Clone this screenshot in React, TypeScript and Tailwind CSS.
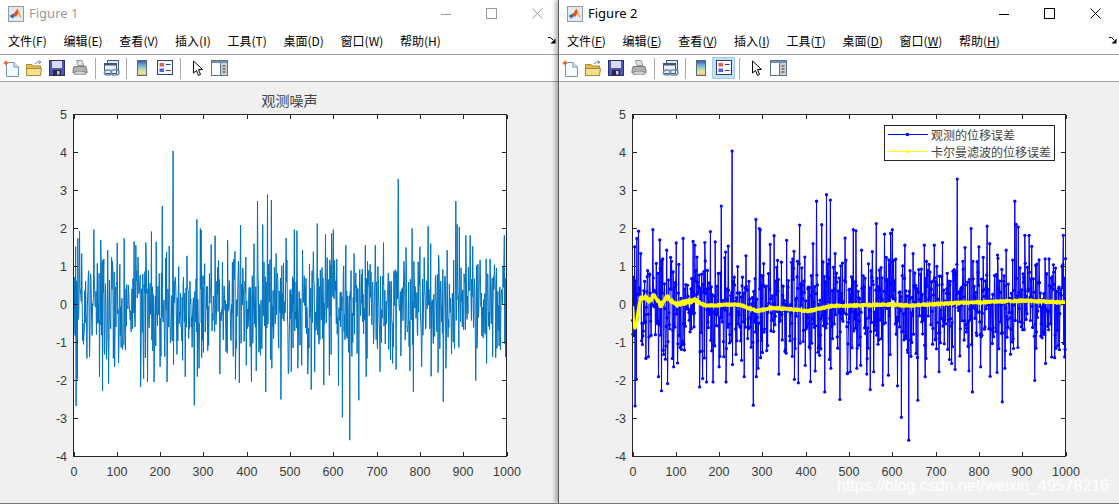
import type { ReactNode } from 'react';

// seeded noise, with the visible peaks of the reference pinned by sample index
const peaks: Record<number, number> = {
  5: 1.52, 6: -2.67, 9: -1.97, 10: 1.74, 14: 1.93, 19: 1.34, 31: -1.42, 47: 1.97, 60: -1.9, 63: 1.7, 67: -2.27,
  70: 1.2, 79: 1.43, 81: -2.08, 88: 1.24, 95: -1.64, 101: 1.62, 104: -1.54, 117: 1.74, 120: -1.2, 140: 1.66,
  144: 1.56, 149: 1.25, 155: -2.17, 162: -1.95, 167: 1.63, 171: -2.04, 180: 1.92, 186: -2.04, 191: 1.65,
  200: -1.64, 205: 2.59, 215: 1.38, 216: -2.04, 221: 1.54, 230: 4.04, 231: -1.58, 243: 1, 252: -1.47, 258: -1.9,
  262: 1.28, 279: -2.65, 285: 2.24, 286: -1.9, 290: -1.68, 293: 2, 295: 1.96, 296: -1.4, 318: 1.58, 327: 1.81,
  335: 1.16, 338: -1.83, 356: 1.69, 373: 1.4, 374: -1.97, 383: -2.06, 386: 2.09, 398: 1.25, 399: -1.6, 411: -2.03,
  417: 1.6, 422: -1.75, 425: 2.72, 437: 2.1, 444: -2.3, 448: 2.89, 457: 2.75, 458: -1.68, 468: 1.34, 479: -2.5,
  491: 1.75, 496: -1.82, 497: -1.8, 503: -1.77, 510: 1.97, 516: 1.94, 518: -1.68, 527: -1.6, 529: 1.43, 541: -1.83,
  549: -2.24, 554: 1.39, 557: -1.77, 563: 2.13, 578: -2.12, 582: 1.85, 591: -1.86, 596: 1.87, 600: 1.97, 612: -2.14,
  621: -2.97, 629: 1.56, 638: -3.57, 648: 1.34, 659: -2.52, 674: 1.56, 676: -1.9, 697: 1.56, 708: -1.77, 716: 1.63,
  737: -1.55, 745: -1.71, 750: 3.3, 768: 1.5, 777: -1.75, 782: 2, 785: -2.3, 800: 1.52, 804: -1.64, 819: 2.06,
  825: 1.6, 826: -1.89, 842: -1.79, 843: 1.3, 854: -2.56, 860: -1.68, 863: 1.43, 883: 2.72, 886: 2.11, 891: 2.04,
  906: 1.82, 916: 1.82, 922: 1.53, 929: -2, 934: 1.06, 953: 1.2, 954: -1.55, 973: 0.85, 975: -1.4, 995: 1.82, 998: -1.38,
};

const filterPoints = [
  [0, 0], [3, -0.55], [8, -0.6], [14, -0.1], [19, 0.16], [30, 0.18], [39, 0.09], [51, 0.26], [65, -0.03], [80, 0.2],
  [99, 0], [145, 0.11], [168, -0.03], [245, 0], [287, -0.17], [322, -0.09], [406, -0.17], [460, -0.04], [599, 0],
  [637, -0.03], [753, 0.04], [907, 0.1], [1000, 0.05],
];

function makeRandom(seed: number) {
  let a = seed;
  return () => {
    a = (a + 0x6d2b79f5) | 0;
    let t = Math.imul(a ^ (a >>> 15), 1 | a);
    t = (t + Math.imul(t ^ (t >>> 7), 61 | t)) ^ t;
    return ((t ^ (t >>> 14)) >>> 0) / 4294967296;
  };
}

const rand = makeRandom(4957);
const noise: number[] = [];
for (let s = 0; s <= 1000; s++) {
  const g = Math.sqrt(-2 * Math.log(rand() + 1e-9)) * Math.cos(2 * Math.PI * rand());
  let v = g * 0.8;
  // anything past the band is redrawn, so the tops of the trace stay uneven
  if (v > 1.25 || v < -1.45) v = (rand() * 2 - 1) * 1.2;
  noise.push(peaks[s] ?? v);
}

const filtered: number[] = [];
for (let s = 0; s <= 1000; s++) {
  const i = filterPoints.findIndex((p) => p[0] >= s);
  const b = filterPoints[Math.max(i, 0)];
  const a = filterPoints[Math.max(i - 1, 0)];
  const t = b[0] === a[0] ? 0 : (s - a[0]) / (b[0] - a[0]);
  const jitter = (rand() - 0.5) * (s < 150 ? 0.1 : 0.05);
  filtered.push(a[1] + (b[1] - a[1]) * t + jitter);
}

const X = (s: number) => 73.5 + s * 0.433;
const Y = (v: number) => 32.5 + (5 - v) * 38;
const toPoints = (data: number[]) => data.map((v, s) => `${X(s).toFixed(2)},${Y(v).toFixed(2)}`).join(' ');

const xTicks = [0, 100, 200, 300, 400, 500, 600, 700, 800, 900, 1000];
const yTicks = [5, 4, 3, 2, 1, 0, -1, -2, -3, -4];
const sansFont = '"Liberation Sans", Arial, sans-serif';
const cjkFont = '"Noto Sans CJK SC", sans-serif';

function Axes({ children, title }: { children?: ReactNode; title?: string }) {
  return (
    <svg width="558" height="421" className="block">
      <rect x="73.5" y="32.5" width="433" height="342" fill="#ffffff" />
      {children}
      <rect x="73.5" y="32.5" width="433" height="342" fill="none" stroke="#262626" />
      {xTicks.map((t) => {
        const x = Math.round(X(t * 1)) + 0.5;
        return (
          <g key={t}>
            <path d={`M${x} 374V370M${x} 33V37`} stroke="#262626" />
            <text x={x - 0.5} y="394" textAnchor="middle" fontSize="12.5" fill="#3a3a3a" fontFamily={sansFont}>
              {t}
            </text>
          </g>
        );
      })}
      {yTicks.map((t) => {
        const y = Math.round(Y(t) - 0.5) + 0.5;
        return (
          <g key={t}>
            <path d={`M74 ${y}H78M506 ${y}H502`} stroke="#262626" />
            <text x="67" y={y + 4.5} textAnchor="end" fontSize="12.5" fill="#3a3a3a" fontFamily={sansFont}>
              {t}
            </text>
          </g>
        );
      })}
      {title && (
        <text x="289.5" y="24" textAnchor="middle" fontSize="14" fill="#444444" fontFamily={cjkFont}>
          {title}
        </text>
      )}
    </svg>
  );
}

function NoisePlot() {
  return (
    <Axes title="观测噪声">
      <polyline points={toPoints(noise)} fill="none" stroke="#0072bd" strokeWidth="1" />
    </Axes>
  );
}

function ComparePlot() {
  return (
    <Axes>
      <polyline points={toPoints(noise)} fill="none" stroke="#0000ff" strokeWidth="1" />
      {noise.map((v, s) => (
        <circle key={s} cx={X(s)} cy={Y(v)} r="1.6" fill="#0000ff" />
      ))}
      <polyline points={toPoints(filtered)} fill="none" stroke="#ffff00" strokeWidth="3.2" strokeLinejoin="round" />
      <rect x="325.5" y="43.5" width="170" height="35" fill="#ffffff" stroke="#262626" />
      <path d="M329 52.5H369" stroke="#0000ff" />
      <circle cx="348.5" cy="52.5" r="1.8" fill="#0000ff" />
      <path d="M329 69.5H369" stroke="#ffff00" />
      <circle cx="348.5" cy="69.5" r="1.8" fill="#ffff00" />
      <text x="372" y="57.5" fontSize="12" fill="#444444" fontFamily={cjkFont}>观测的位移误差</text>
      <text x="372" y="74.5" fontSize="12" fill="#444444" fontFamily={cjkFont}>卡尔曼滤波的位移误差</text>
    </Axes>
  );
}

function MatlabIcon() {
  return (
    <svg width="16" height="16" viewBox="0 0 16 16">
      <rect x="0.5" y="0.5" width="15" height="15" fill="#e4eaf0" stroke="#8f9baa" />
      <path d="M1.5 10L5.5 7.5L7.5 9.5L4.5 12.5Z" fill="#2f6fb5" />
      <path d="M5.5 8.5L9.5 2.5L11 6L8 11Z" fill="#e8501e" />
      <path d="M9.5 2.5L14 12.5L11.5 10.5L10 7Z" fill="#f5a028" />
    </svg>
  );
}

function Toolbar({ active }: { active?: boolean }) {
  const slot = 'w-[23px] h-[22px] flex items-center justify-center shrink-0';
  const sep = 'w-px h-[21px] bg-[#a9a9a9] shrink-0';
  return (
    <div className="h-[26px] flex items-center border-b border-[#a0a0a0] box-content shrink-0">
      <div className={`${slot} -ml-px`}>
        <svg width="16" height="17" viewBox="0 0 16 17">
          <path d="M3.5 2.5H11L15.5 7V16.5H3.5Z" fill="#f6fbff" stroke="#6e93b5" />
          <path d="M11 2.5V7H15.5" fill="#dbe8f2" stroke="#6e93b5" />
          <path d="M3 0V6M0 3H6" stroke="#ee9a70" />
          <circle cx="3" cy="3" r="1.7" fill="#e0592a" />
        </svg>
      </div>
      <div className={slot}>
        <svg width="16" height="16" viewBox="0 0 16 16">
          <path d="M0.5 4.5H6L7 6H14.5V15.5H0.5Z" fill="#e2bd50" stroke="#a78a32" />
          <path d="M0.5 8.5H15.5L14.5 15.5H0.5Z" fill="#f6df8c" stroke="#a78a32" />
          <path d="M9 4Q11 1.5 14 2M12.5 0.5L15 2L13 4" fill="none" stroke="#6b8aa8" />
        </svg>
      </div>
      <div className={slot}>
        <svg width="16" height="16" viewBox="0 0 16 16">
          <rect x="0.5" y="0.5" width="15" height="15" fill="#4f56b5" stroke="#2b2f75" />
          <rect x="3" y="1" width="10" height="7" fill="#d9dcf5" />
          <rect x="4" y="10" width="8" height="5.5" fill="#2a2a3a" />
          <rect x="8" y="11" width="2.5" height="3.5" fill="#c9cbe0" />
        </svg>
      </div>
      <div className={slot}>
        <svg width="16" height="16" viewBox="0 0 16 16">
          <path d="M4.5 0.5H10L12 5.5H6Z" fill="#d8e4ec" stroke="#8d9aa5" />
          <path d="M2 6.5H14L15 10.5V13H1V10.5Z" fill="#b0b0b0" stroke="#808080" />
          <path d="M2.5 11H13.5V15H2.5Z" fill="#8e8e8e" />
          <ellipse cx="8" cy="13" rx="5" ry="1.5" fill="#d2d2d2" />
        </svg>
      </div>
      <div className={`${sep} ml-[4px] mr-[4px]`} />
      <div className={slot}>
        <svg width="17" height="17" viewBox="0 0 17 17">
          <rect x="4.5" y="0.5" width="11" height="9" fill="#dfe7ef" stroke="#3d5679" />
          <rect x="1.5" y="3.5" width="12" height="10" fill="#eef3f8" stroke="#3d5679" />
          <path d="M2 4H13V5.5H2Z" fill="#3d5679" />
          <rect x="1.5" y="10" width="7" height="5" rx="2.5" fill="none" stroke="#6f8fb0" strokeWidth="1.6" />
          <rect x="8" y="10" width="8" height="5" rx="2.5" fill="none" stroke="#6f8fb0" strokeWidth="1.6" />
        </svg>
      </div>
      <div className={`${sep} ml-[3px] mr-[3px]`} />
      <div className={slot}>
        <svg width="12" height="17" viewBox="0 0 12 17">
          <defs>
            <linearGradient id="colorbarFill" x1="0" y1="0" x2="0" y2="1">
              <stop offset="0" stopColor="#3f4fae" />
              <stop offset="0.35" stopColor="#72b6d8" />
              <stop offset="0.6" stopColor="#b5e0a5" />
              <stop offset="0.8" stopColor="#f1e58f" />
              <stop offset="1" stopColor="#eeaaa0" />
            </linearGradient>
          </defs>
          <rect x="1.5" y="0.5" width="9" height="15" fill="url(#colorbarFill)" stroke="#56677f" />
        </svg>
      </div>
      <div className={`${slot} ${active ? 'bg-[#c4e0f6] border border-[#9fcdf0]' : ''}`}>
        <svg width="16" height="16" viewBox="0 0 16 16">
          <rect x="0.5" y="0.5" width="15" height="14" fill="#f6f8fb" stroke="#2f4060" />
          <rect x="2.5" y="3" width="4.5" height="3.5" fill="#e05b5b" />
          <rect x="2.5" y="8.5" width="4.5" height="3.5" fill="#5b5be0" />
          <path d="M9 4.5H13.5M9 10.5H13.5" stroke="#2f4060" />
        </svg>
      </div>
      <div className={`${sep} ml-[4px] mr-[5px]`} />
      <div className={slot}>
        <svg width="12" height="17" viewBox="0 0 12 17">
          <path d="M1.5 1V13L4.5 10.5L6.5 15.5L8.5 14.5L6.5 9.5H10.5Z" fill="#ffffff" stroke="#000000" />
        </svg>
      </div>
      <div className={`${slot} -ml-[1px]`}>
        <svg width="17" height="16" viewBox="0 0 17 16">
          <rect x="0.5" y="0.5" width="16" height="15" fill="#ffffff" stroke="#5d7283" />
          <rect x="1" y="1" width="15" height="2" fill="#6f94ad" />
          <rect x="9" y="3" width="7" height="12" fill="#d0d0d0" />
          <path d="M9.5 3V15" stroke="#5d7283" />
          <path d="M11.5 6H14.5M11.5 9H14.5M11.5 12H14.5" stroke="#333333" />
        </svg>
      </div>
    </div>
  );
}

function Window({ name, active, wide, children }: { name: string; active?: boolean; wide?: boolean; children: ReactNode }) {
  const menus = [['文件', 'F'], ['编辑', 'E'], ['查看', 'V'], ['插入', 'I'], ['工具', 'T'], ['桌面', 'D'], ['窗口', 'W'], ['帮助', 'H']];
  const ctl = active ? '#000000' : '#9a9a9a';
  return (
    <div
      className={
        wide
          ? 'relative z-10 w-[561px] h-full flex flex-col bg-white border-l border-[#5a5a5a] shadow-[-3px_0_4px_rgba(0,0,0,0.28)]'
          : 'w-[558px] h-full flex flex-col bg-white'
      }
    >
      <div className="h-[27px] flex items-center pl-[8px] shrink-0">
        <MatlabIcon />
        <span className={`ml-[5px] text-[13px] font-['Noto_Sans'] ${active ? 'text-black' : 'text-[#999999]'}`}>{name}</span>
        <div className={`ml-auto flex items-center h-full ${wide ? 'pr-[18px]' : 'pr-[15px]'}`}>
          <svg width="10" height="10" viewBox="0 0 10 10"><path d="M0 5.5H10" stroke={ctl} /></svg>
          <svg width="11" height="11" viewBox="0 0 11 11" className="ml-[35px]"><rect x="0.5" y="0.5" width="10" height="10" fill="none" stroke={ctl} /></svg>
          <svg width="11" height="11" viewBox="0 0 11 11" className="ml-[35px]"><path d="M0.5 0.5L10.5 10.5M10.5 0.5L0.5 10.5" stroke={ctl} /></svg>
        </div>
      </div>
      <div className="h-[27px] flex items-center pl-[8px] border-b border-[#a0a0a0] box-content shrink-0">
        <div className="flex gap-[16.7px] text-[12px] text-black font-['Noto_Sans_CJK_SC',sans-serif]">
          {menus.map(([label, key]) => (
            <span key={key} className="whitespace-nowrap">
              {label}({active ? <u>{key}</u> : key})
            </span>
          ))}
        </div>
        <svg width="8" height="7" viewBox="0 0 8 7" className="ml-auto mr-[2px]">
          <path d="M0 0.5H2.5L5 3" fill="none" stroke="#000000" />
          <path d="M7.5 1.5V6.5H2.5Z" fill="#000000" />
        </svg>
      </div>
      <Toolbar active={active} />
      <div className="flex-1 bg-[#f0f0f0] overflow-hidden">{children}</div>
    </div>
  );
}

export default function App() {
  return (
    <div className="relative w-[1119px] h-[504px] overflow-hidden flex items-start border-b border-[#777777] bg-[#f0f0f0]">
      <Window name="Figure 1">
        <NoisePlot />
      </Window>
      <Window name="Figure 2" active wide>
        <ComparePlot />
      </Window>
      <div className="absolute z-20 left-[837px] top-[478px] text-[16px] leading-[15px] text-white/60 font-['Liberation_Sans',sans-serif] whitespace-nowrap [text-shadow:0_0_1px_rgba(255,255,255,0.8)]">
        https://blog.csdn.net/weixin_49578216
      </div>
    </div>
  );
}
